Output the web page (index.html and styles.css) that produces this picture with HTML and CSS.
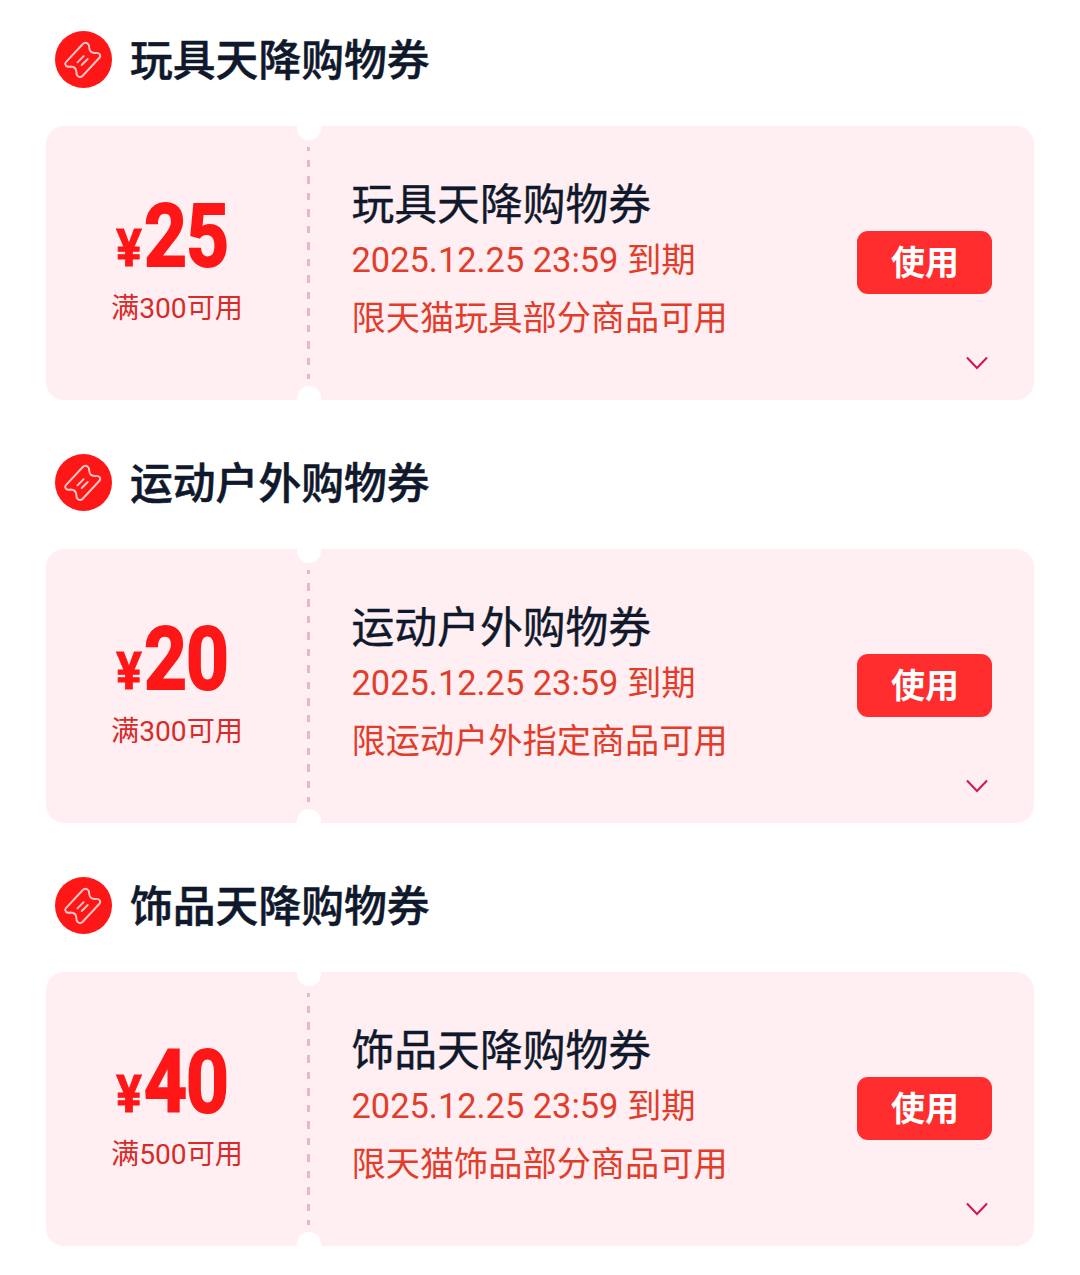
FILE: index.html
```html
<!DOCTYPE html>
<html lang="zh-CN">
<head>
    <meta charset="UTF-8">
    <title>购物券</title>
    <link rel="stylesheet" href="styles.css">
</head>
<body>
    <svg class="sprite" width="0" height="0">
        <symbol id="ticket" viewBox="0 0 57 57">
            <g fill="none" stroke="#ffc9c9" stroke-width="1.9" stroke-linecap="round" stroke-linejoin="round">
                <path d="M10.7 31.3 L27.8 13 Q30 10.7 32.5 12.5 Q34.5 14 34.2 16.500 Q34.4 22.3 40.5 22 Q43 21.5 44.7 23.2 Q46 25 44.2 27 L27.5 45 Q25.3 47 23 45.2 Q21 43.5 21.4 41 Q21 35.5 15.5 35.5 Q12.5 36.2 10.9 34.7 Q9.5 33 10.7 31.3 Z"/>
                <path d="M22.5 31.3 L28.6 25.2 M26.7 34 L32.7 28"/>
            </g>
        </symbol>
        <symbol id="arrow" viewBox="0 0 22 14">
            <path d="M1 1.5 L11 12 L21 1.5" fill="none" stroke="#d3164f" stroke-width="2"/>
        </symbol>
    </svg>

    <div class="section">
        <div class="header">
            <svg class="icon"><use href="#ticket"/></svg>
            <h2>玩具天降购物券</h2>
        </div>
        <div class="coupon">
            <div class="price">
                <div class="amount"><span class="yen">¥</span><span class="number">25</span></div>
                <div class="condition">满300可用</div>
            </div>
            <div class="info">
                <h3>玩具天降购物券</h3>
                <p>2025.12.25 23:59 到期</p>
                <p class="scope">限天猫玩具部分商品可用</p>
            </div>
            <div class="actions">
                <button>使用</button>
                <svg class="arrow"><use href="#arrow"/></svg>
            </div>
        </div>
    </div>

    <div class="section">
        <div class="header">
            <svg class="icon"><use href="#ticket"/></svg>
            <h2>运动户外购物券</h2>
        </div>
        <div class="coupon">
            <div class="price">
                <div class="amount"><span class="yen">¥</span><span class="number">20</span></div>
                <div class="condition">满300可用</div>
            </div>
            <div class="info">
                <h3>运动户外购物券</h3>
                <p>2025.12.25 23:59 到期</p>
                <p class="scope">限运动户外指定商品可用</p>
            </div>
            <div class="actions">
                <button>使用</button>
                <svg class="arrow"><use href="#arrow"/></svg>
            </div>
        </div>
    </div>

    <div class="section">
        <div class="header">
            <svg class="icon"><use href="#ticket"/></svg>
            <h2>饰品天降购物券</h2>
        </div>
        <div class="coupon">
            <div class="price">
                <div class="amount"><span class="yen">¥</span><span class="number">40</span></div>
                <div class="condition">满500可用</div>
            </div>
            <div class="info">
                <h3>饰品天降购物券</h3>
                <p>2025.12.25 23:59 到期</p>
                <p class="scope">限天猫饰品部分商品可用</p>
            </div>
            <div class="actions">
                <button>使用</button>
                <svg class="arrow"><use href="#arrow"/></svg>
            </div>
        </div>
    </div>
</body>
</html>
```
FILE: styles.css
```css
* {
    box-sizing: border-box;
}
body {
    margin: 0;
    padding: 31px 46px 0;
    background: #fff;
    font-family: Roboto, "Noto Sans CJK SC", sans-serif;
}
.sprite {
    position: absolute;
}
h2, h3, p {
    margin: 0;
    white-space: nowrap;
}
.section {
    margin-bottom: 54.7px;
}
.header {
    display: flex;
    align-items: center;
    gap: 18px;
    height: 57px;
    margin-bottom: 38px;
    padding-left: 9px;
}
.icon {
    width: 57px;
    height: 57px;
    border-radius: 50%;
    background: #ff1617;
}
h2 {
    padding-top: 3px;
    font-size: 42.8px;
    font-weight: 500;
    line-height: 57px;
    color: #10192c;
    -webkit-text-stroke: 0.5px #10192c;
}
.coupon {
    position: relative;
    display: flex;
    height: 273.5px;
    border-radius: 18px;
    background: #ffeff2;
}
/* encoches en haut et en bas */
.coupon::before,
.coupon::after {
    content: "";
    position: absolute;
    left: 251px;
    width: 24px;
    height: 14px;
    background: #fff;
}
.coupon::before {
    top: 0;
    border-radius: 0 0 12px 12px;
}
.coupon::after {
    bottom: 0;
    border-radius: 12px 12px 0 0;
}
.price {
    position: relative;
    display: flex;
    flex-direction: column;
    align-items: center;
    width: 262px;
    padding-top: 65px;
}
.price::after {
    content: "";
    position: absolute;
    top: 21px;
    bottom: 21px;
    right: -2px;
    width: 3px;
    background: repeating-linear-gradient(to bottom, #eab9be 0, #eab9be 7.5px, transparent 7.5px, transparent 16.5px) 0 -3.5px / 3px 240px no-repeat;
}
.amount {
    display: flex;
    align-items: baseline;
    width: 122px;
    height: 97px;
    color: #ff1617;
    font-weight: 700;
    line-height: 90px;
}
.yen {
    width: 28px;
    font-size: 52px;
    transform: scaleX(0.93);
    transform-origin: left;
    -webkit-text-stroke: 0.8px #ff1617;
}
.number {
    width: 86px;
    font-size: 88px;
    letter-spacing: -1px;
    transform: scaleX(0.85);
    transform-origin: left;
    -webkit-text-stroke: 2px #ff1617;
}
.condition {
    font-size: 28.2px;
    line-height: 42px;
    color: #d72b2a;
}
.info {
    flex: 1;
    padding: 50px 0 0 43.5px;
}
h3 {
    height: 56px;
    font-size: 42.8px;
    font-weight: 400;
    line-height: 58px;
    color: #10192c;
    -webkit-text-stroke: 0.4px #10192c;
}
p {
    font-size: 34.4px;
    line-height: 57px;
    color: #e23d2b;
}
.scope {
    font-size: 34.2px;
    line-height: 59px;
}
.actions {
    display: flex;
    flex-direction: column;
    align-items: flex-end;
    padding: 105px 42px 0 0;
}
button {
    width: 135px;
    height: 63px;
    padding: 0 0 5px 1px;
    border: none;
    border-radius: 11px;
    background: #ff2d2d;
    color: #fff;
    font-family: inherit;
    font-size: 34px;
    font-weight: 700;
}
.arrow {
    width: 22px;
    height: 14px;
    margin: 62px 4.5px 0 0;
}
```
